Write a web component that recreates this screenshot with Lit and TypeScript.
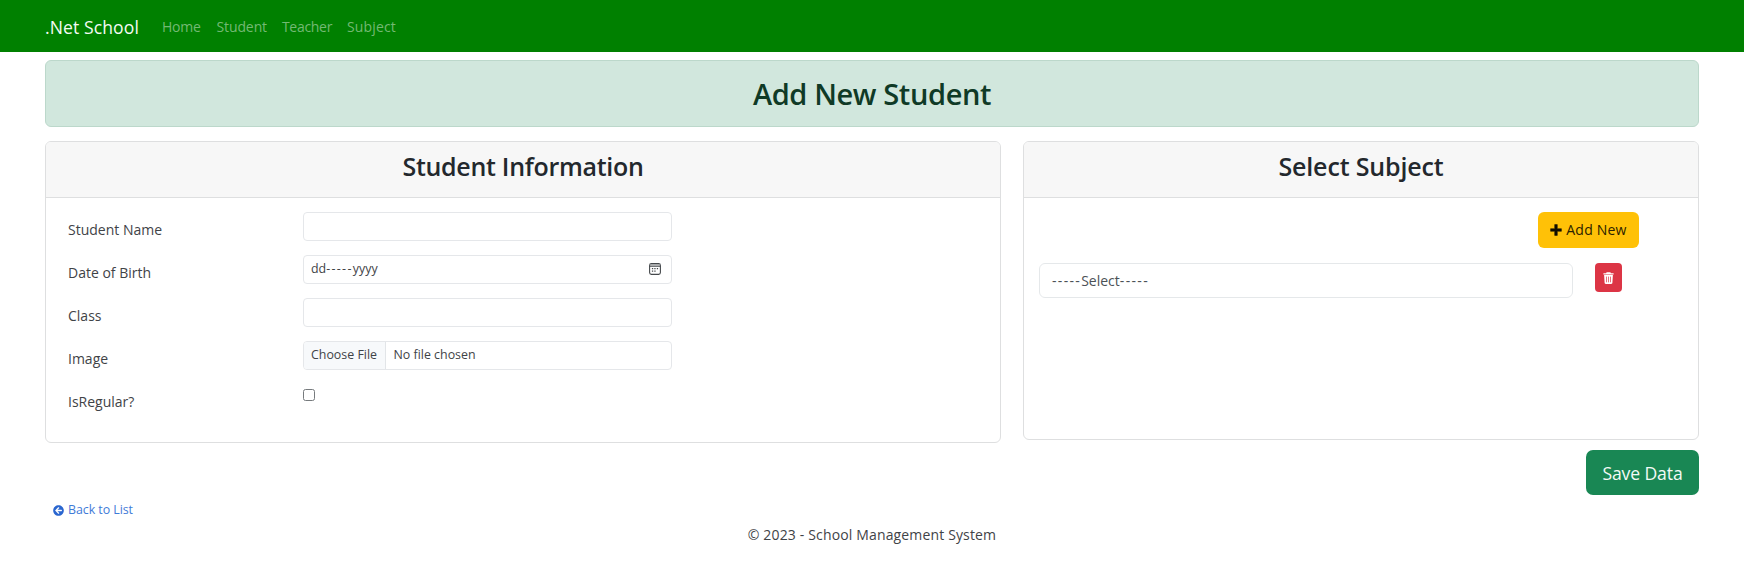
import { LitElement, html, css } from "lit";
import { customElement } from "lit/decorators.js";

@customElement("app-root")
class AppRoot extends LitElement {
  static styles = css`
    :host { display: block; height: 572px; background: #fff; color: #3f4347; font: 400 14px/20px "Open Sans", "Noto Sans", sans-serif; }
    * { box-sizing: border-box; }
    h1, h2 { margin: 0; font-weight: 600; }
    a { text-decoration: none; color: inherit; white-space: nowrap; }
    button { font: inherit; border: 0; padding: 0; display: flex; align-items: center; justify-content: center; white-space: nowrap; }
    svg { display: block; flex: none; }
    .nav { height: 52px; background: #008000; display: flex; align-items: center; padding: 1px 45px 0; color: #73b973; }
    .brand { font-size: 17.6px; color: #f4fbf4; margin-right: 23px; letter-spacing: 0.08px; }
    .links { display: flex; }
    .home { width: 54.5px; letter-spacing: -0.2px; }
    .student { width: 65.5px; letter-spacing: -0.1px; }
    .teacher { width: 65px; letter-spacing: -0.3px; }
    .subject { letter-spacing: 0.15px; }
    .page { padding: 8px 45px 0; }
    .alert { height: 67px; border: 1px solid #bcd8cb; border-radius: 6px; background: #d1e7dd; display: flex; align-items: center; justify-content: center; }
    .alert h1 { font-size: 29px; line-height: 34px; color: #0f3a26; letter-spacing: -0.38px; }
    .columns { display: grid; grid-template-columns: 956px 676px; justify-content: space-between; margin-top: 14px; align-items: start; }
    .card { border: 1px solid #dedfe0; border-radius: 6px; background: #fff; overflow: hidden; }
    .info { height: 302px; }
    .subjects { height: 299px; }
    .card h2 { height: 56px; padding-top: 8px; border-bottom: 1px solid #dedfe0; background: #f7f7f7; text-align: center; font-size: 25px; line-height: 32px; color: #23282d; letter-spacing: -0.3px; }
    .subjects h2 { letter-spacing: -0.15px; }
    .rows { padding: 14px 22px 0; }
    .row { display: grid; grid-template-columns: 235px 369px; height: 42.9px; align-items: start; }
    .row label { padding-top: 8px; }
    .control { height: 29px; border: 1px solid #e5e7ea; border-radius: 4px; display: flex; align-items: center; font-size: 12.4px; padding: 0 10px 0 7px; overflow: hidden; }
    .grow { flex: 1; }
    .dash { letter-spacing: 1.33px; }
    .file { padding-left: 0; }
    .choose { align-self: stretch; width: 82px; padding-left: 7px; background: #f7f9fb; border-right: 1px solid #e2e5e8; display: flex; align-items: center; margin-right: 7.5px; }
    .check { appearance: none; width: 12px; height: 12px; border: 1px solid #767a7d; border-radius: 2.5px; margin: 5px 0 0; background: #fff; }
    .picker { padding: 14px 15px 0; }
    .add { width: 101px; height: 36px; margin-left: 499px; border-radius: 6px; background: #ffc107; color: #2b2100; gap: 4px; letter-spacing: 0.22px; }
    .line { display: flex; margin-top: 15px; gap: 22px; align-items: flex-start; }
    .select { width: 534px; height: 35px; border: 1px solid #e5e8ea; border-radius: 6px; display: flex; align-items: center; padding-left: 12px; color: #4b5156; }
    .trash { width: 27px; height: 29px; border-radius: 4px; background: #dc3545; }
    .side { display: flex; flex-direction: column; align-items: stretch; }
    .save { align-self: flex-end; width: 113px; height: 45px; margin-top: 10px; border-radius: 7px; background: #198754; color: #f3faf6; font-size: 17.6px; letter-spacing: -0.12px; }
    .back { display: flex; align-items: center; gap: 4px; margin: 5px 0 0 8px; height: 20px; font-size: 12.4px; color: #3f7bd8; letter-spacing: -0.05px; }
    .footer { text-align: center; margin-top: 5px; letter-spacing: 0.15px; }
  `;

  render() {
    return html`
      <nav class="nav">
        <a class="brand">.Net School</a>
        <div class="links"><a class="home">Home</a><a class="student">Student</a><a class="teacher">Teacher</a><a class="subject">Subject</a></div>
      </nav>
      <main class="page">
        <div class="alert"><h1>Add New Student</h1></div>
        <div class="columns">
          <section class="card info">
            <h2>Student Information</h2>
            <div class="rows">
              <div class="row"><label>Student Name</label><div class="control"></div></div>
              <div class="row"><label>Date of Birth</label><div class="control">
                <span class="grow">dd<span class="dash">-----</span>yyyy</span>
                <svg width="12" height="12" viewBox="0 0 12 12"><rect x=".6" y=".6" width="10.8" height="10.8" rx="1.8" fill="none" stroke="#44484b" stroke-width="1.1"/><path d="M.8 1.9h10.4" stroke="#9a9c9e" stroke-width="1.4"/><path d="M.6 3.2h10.8" stroke="#44484b" stroke-width="1.1"/><path d="M5.3 5.7h1.3M7.8 5.7h1.3M2.9 8.2h1.3M5.3 8.2h1.3M2.9 5.7h1.3" stroke="#44484b" stroke-width="1.3"/></svg>
              </div></div>
              <div class="row"><label>Class</label><div class="control"></div></div>
              <div class="row"><label>Image</label><div class="control file"><span class="choose">Choose File</span>No file chosen</div></div>
              <div class="row"><label>IsRegular?</label><input class="check" type="checkbox"></div>
            </div>
          </section>
          <div class="side">
            <section class="card subjects">
              <h2>Select Subject</h2>
              <div class="picker">
                <button class="add"><svg width="12" height="12" viewBox="0 0 12 12"><path d="M4.7 0.6h2.6v4.1h4.1v2.6H7.3v4.1H4.7V7.3H.6V4.7h4.1z" fill="#120e00" stroke="#120e00" stroke-width=".5" stroke-linejoin="round"/></svg>Add New</button>
                <div class="line">
                  <div class="select"><span class="dash">-----</span>Select<span class="dash">-----</span></div>
                  <button class="trash"><svg width="11" height="12" viewBox="0 0 11 12"><path d="M3.6.3h3.8l.5 1H10.6v1.3H.4V1.3h2.7z" fill="#fff"/><path d="M1.1 3.1h8.8l-.5 7.6c0 .7-.5 1.2-1.2 1.2H2.8c-.7 0-1.2-.5-1.2-1.2z" fill="#fff"/><path d="M3.5 4.6v5.7M5.5 4.6v5.7M7.5 4.6v5.7" stroke="#dc3545" stroke-width=".7"/></svg></button>
                </div>
              </div>
            </section>
            <button class="save">Save Data</button>
          </div>
        </div>
        <a class="back"><svg width="11" height="11" viewBox="0 0 512 512"><path fill="#2a66cf" d="M256 504C119 504 8 393 8 256S119 8 256 8s248 111 248 248-111 248-248 248zm28.900-143.600L209.400 288H392c13.300 0 24-10.700 24-24v-16c0-13.300-10.700-24-24-24H209.400l75.500-72.400c9.700-9.300 9.900-24.800.4-34.300l-11-10.900c-9.400-9.400-24.600-9.400-33.900 0L107.700 239c-9.400 9.400-9.400 24.600 0 33.900l132.700 132.700c9.400 9.400 24.600 9.400 33.900 0l11-10.900c9.500-9.500 9.300-25-.4-34.300z"/></svg>Back to List</a>
        <footer class="footer">© 2023 - School Management System</footer>
      </main>
    `;
  }
}
